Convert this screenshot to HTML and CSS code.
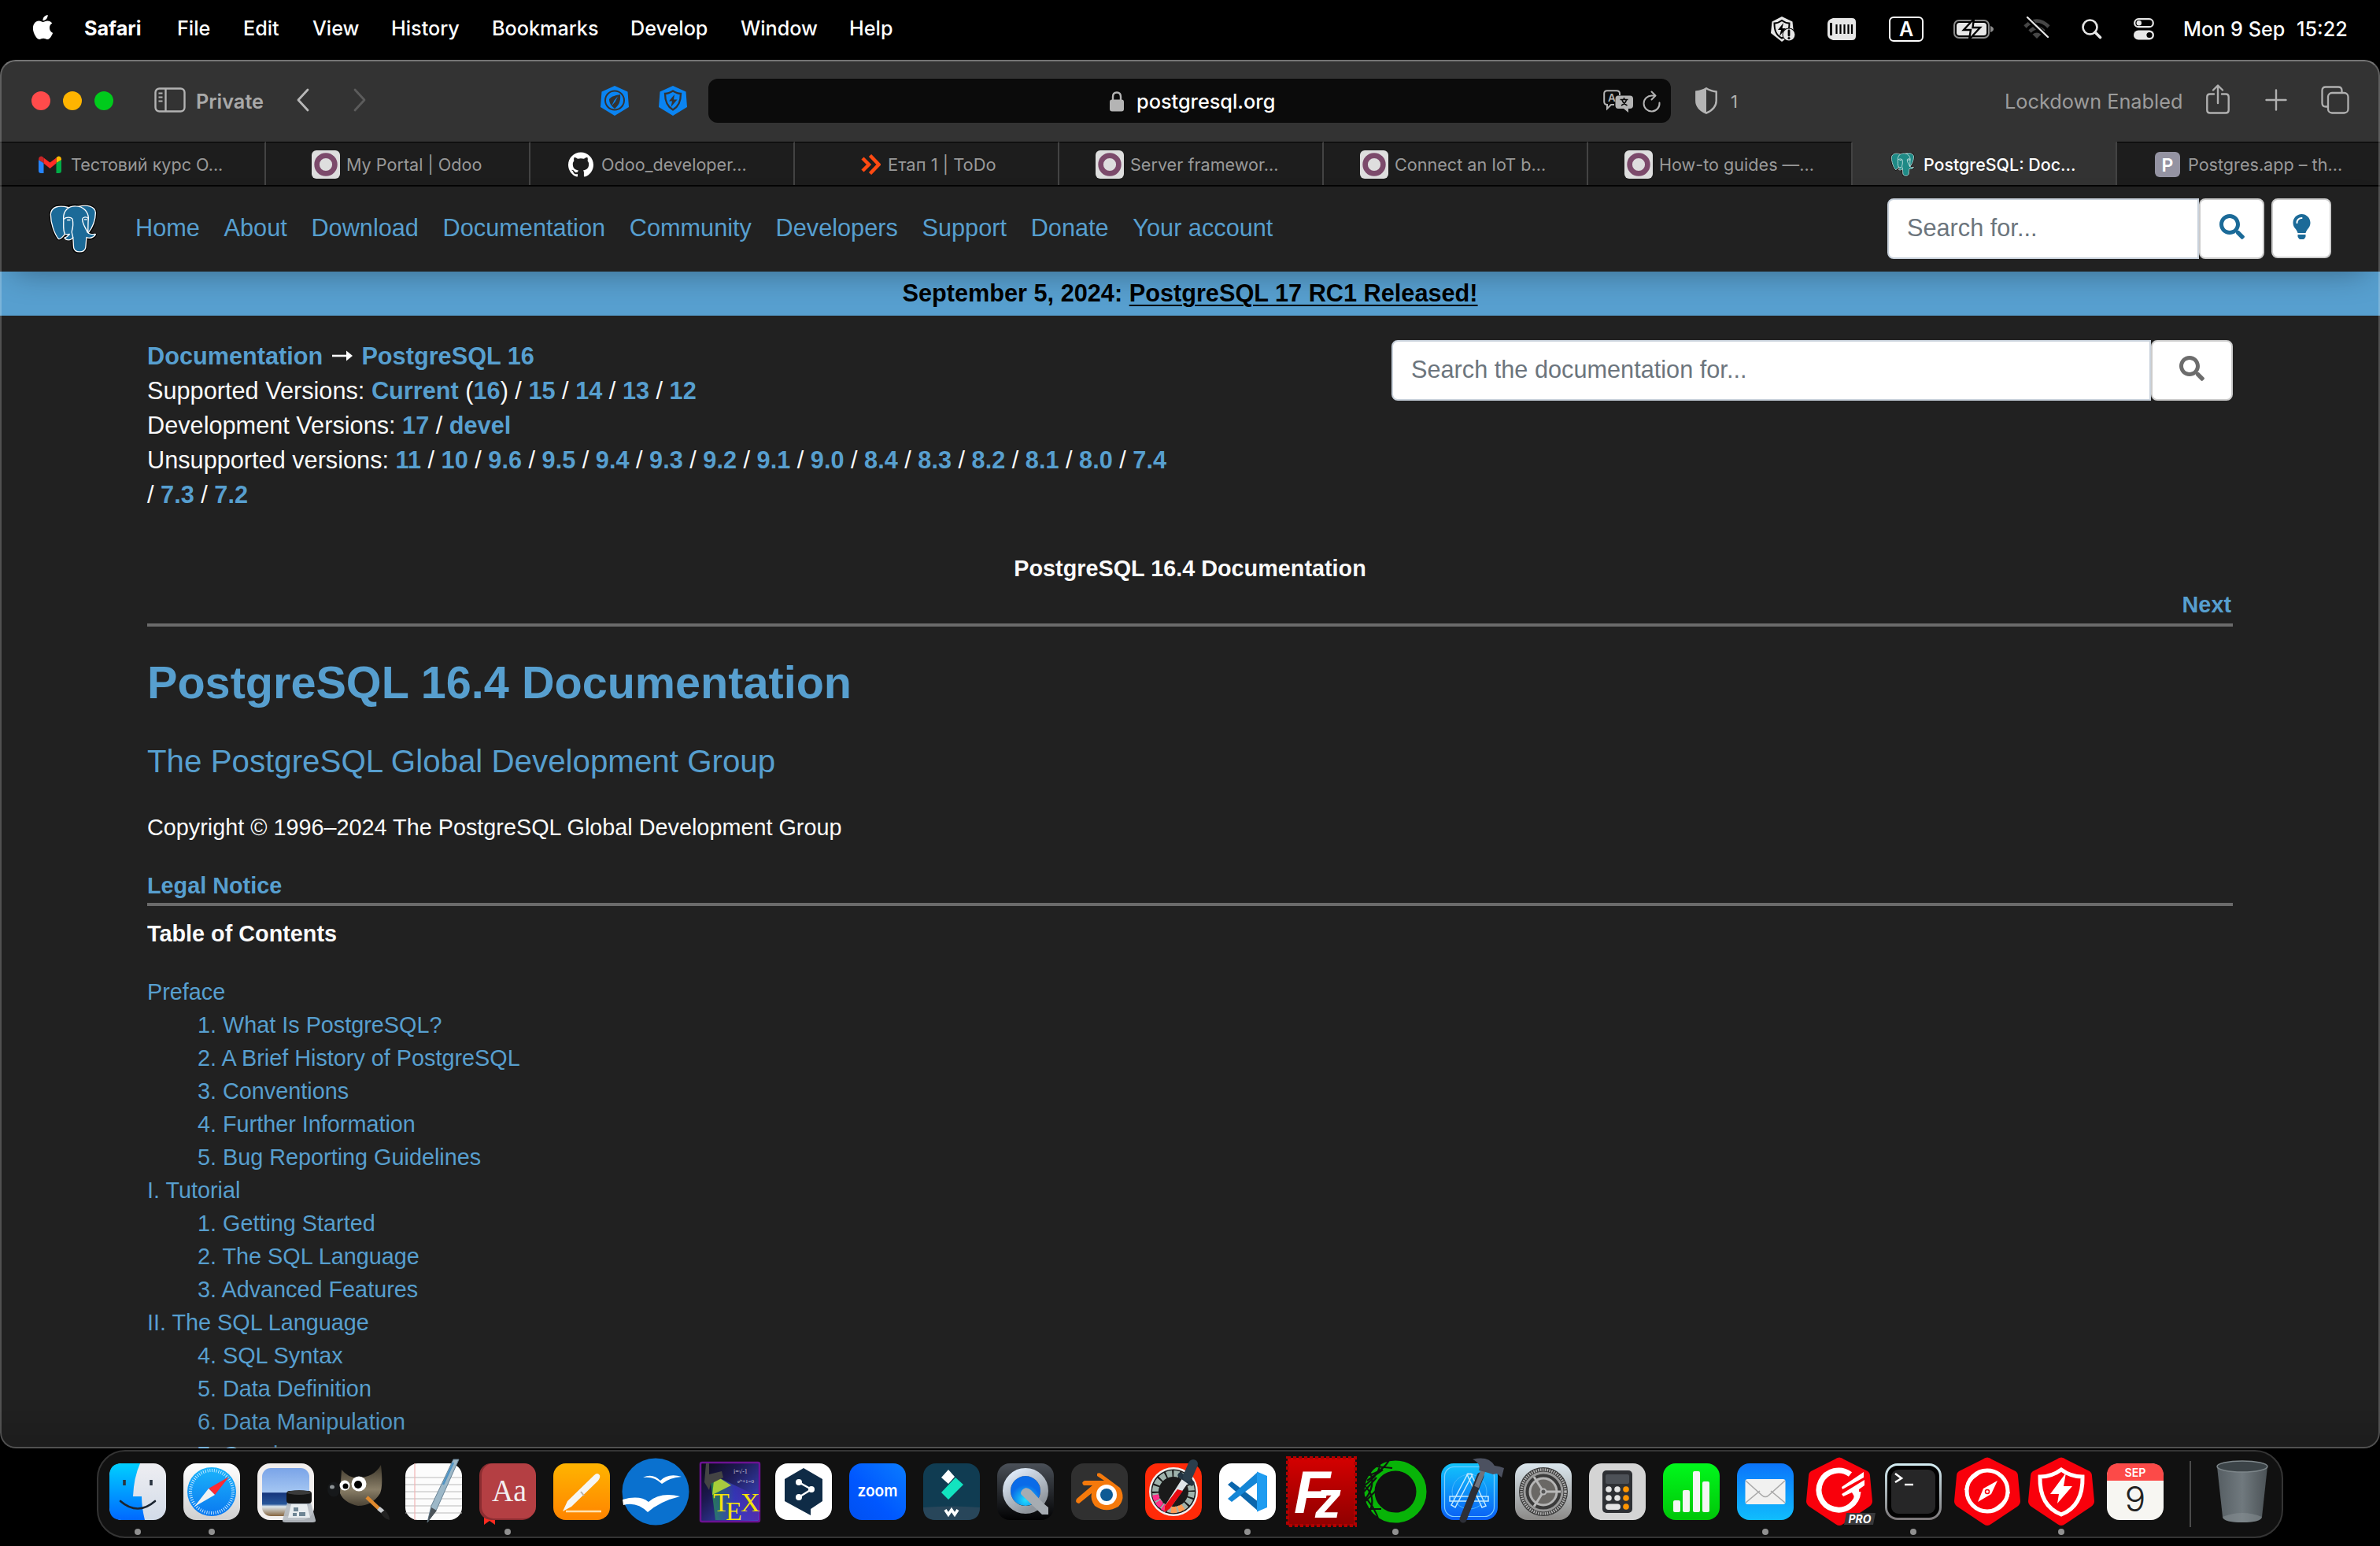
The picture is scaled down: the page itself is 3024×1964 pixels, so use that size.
FILE: index.html
```html
<!DOCTYPE html>
<html lang="en">
<head>
<meta charset="utf-8">
<title>PostgreSQL: Documentation</title>
<link rel="stylesheet" href="styles.css">
</head>
<body>
<svg class="defs" width="0" height="0" aria-hidden="true">
  <defs>
    <symbol id="elephant" viewBox="66 232 186 194">
      <g stroke-linejoin="round" stroke-linecap="round">
        <path d="M130 247C105 238 75 245 73 275C73 310 88 350 103 368C110 372 116 362 126 354C132 352 134 372 142 371L158 366C159 380 159 395 161 404C165 422 200 422 205 403C207 385 207 372 210 364C222 370 240 362 243 352C235 348 228 354 218 346C232 325 244 300 244 268C243 244 210 236 182 244C165 239 145 243 130 247Z" fill="currentColor" stroke="#000" stroke-width="11"/>
        <path d="M182 244C210 236 243 244 244 268C244 300 232 325 216 346L200 300Z" fill="currentColor" stroke="#fff" stroke-width="4"/>
        <path d="M140 248C105 238 75 245 73 275C73 310 88 350 103 368C110 372 116 362 128 350L150 300Z" fill="currentColor" stroke="#fff" stroke-width="4"/>
        <path d="M128 350C118 335 124 305 122 290C121 262 140 242 168 243C198 243 216 265 217 288C215 310 216 330 215 344C220 352 232 350 244 350C240 362 222 368 210 362C208 375 208 390 206 402C202 422 165 422 161 402C159 390 160 375 158 362C150 376 132 374 126 364C136 362 140 356 145 350C140 350 133 353 128 350Z" fill="currentColor" stroke="#fff" stroke-width="4"/>
        <path d="M124 292C132 284 150 284 156 292C160 310 158 325 154 338C152 344 156 350 158 362M217 290C210 282 196 284 194 292C194 312 205 322 214 344M137 296h10M202 294h9" fill="none" stroke="#fff" stroke-width="4"/>
      </g>
    </symbol>
    <symbol id="odoo" viewBox="0 0 36 36">
      <rect width="36" height="36" rx="6" fill="#dedede"/>
      <circle cx="18" cy="18" r="11.4" fill="none" stroke="#7c4a6b" stroke-width="6.6"/>
    </symbol>
    <symbol id="search" viewBox="0 0 512 512">
      <path fill="currentColor" d="M505 442.7L405.3 343c-4.5-4.5-10.6-7-17-7H372c27.6-35.3 44-79.7 44-128C416 93.1 322.9 0 208 0S0 93.1 0 208s93.1 208 208 208c48.3 0 92.7-16.4 128-44v16.3c0 6.4 2.5 12.5 7 17l99.7 99.7c9.4 9.4 24.6 9.4 33.9 0l28.3-28.3c9.4-9.4 9.4-24.6.1-34zM208 336c-70.7 0-128-57.2-128-128 0-70.7 57.2-128 128-128 70.7 0 128 57.2 128 128 0 70.7-57.2 128-128 128z"/>
    </symbol>
    <linearGradient id="gFinder" x2="0" y2="1"><stop stop-color="#00d0ff"/><stop offset="1" stop-color="#0068ff"/></linearGradient>
    <linearGradient id="gFace" x2="0" y2="1"><stop stop-color="#eeeef2"/><stop offset="1" stop-color="#d2dbe8"/></linearGradient>
    <linearGradient id="gWhite" x2="0" y2="1"><stop stop-color="#fff"/><stop offset="1" stop-color="#d0d0d0"/></linearGradient>
    <linearGradient id="gSafari" x2="0" y2="1"><stop stop-color="#1bb4fb"/><stop offset="1" stop-color="#0a78f0"/></linearGradient>
    <linearGradient id="gSky" x2="0" y2="1"><stop stop-color="#7aa4e8"/><stop offset=".5" stop-color="#a4c6f2"/><stop offset=".52" stop-color="#15357c"/><stop offset=".75" stop-color="#28579a"/><stop offset=".8" stop-color="#dfe9ee"/><stop offset="1" stop-color="#86643e"/></linearGradient>
    <linearGradient id="gPages" x2="0" y2="1"><stop stop-color="#ffb400"/><stop offset="1" stop-color="#ff8400"/></linearGradient>
    <linearGradient id="gTex" x2="1" y2="1"><stop stop-color="#0a0a12"/><stop offset=".35" stop-color="#1c1950"/><stop offset="1" stop-color="#4352e0"/></linearGradient>
    <linearGradient id="gBeam" x2="1" y2="0"><stop stop-color="#28b04a"/><stop offset=".5" stop-color="#3a3ad0"/><stop offset="1" stop-color="#5a1c9a"/></linearGradient>
    <linearGradient id="gZoom" x1="1" x2="0" y2="1"><stop stop-color="#0a7cff"/><stop offset=".6" stop-color="#0057ff"/><stop offset="1" stop-color="#0050f0"/></linearGradient>
    <linearGradient id="gQt" x2="0" y2="1"><stop stop-color="#4a5058"/><stop offset="1" stop-color="#020203"/></linearGradient>
    <linearGradient id="gQring" x2=".6" y2="1"><stop stop-color="#e4f0ff"/><stop offset="1" stop-color="#8f959c"/></linearGradient>
    <radialGradient id="gQin" cy=".8"><stop stop-color="#1fe0ff"/><stop offset="1" stop-color="#0a6be8"/></radialGradient>
    <linearGradient id="gFz" x2="0" y2="1"><stop stop-color="#d40000"/><stop offset="1" stop-color="#8f0000"/></linearGradient>
    <linearGradient id="gXcode" x2="0" y2="1"><stop stop-color="#12c4fb"/><stop offset="1" stop-color="#0a5ef5"/></linearGradient>
    <linearGradient id="gSet" x2="0" y2="1"><stop stop-color="#dbe7ee"/><stop offset="1" stop-color="#8b8987"/></linearGradient>
    <linearGradient id="gNum" x2="0" y2="1"><stop stop-color="#00f81c"/><stop offset="1" stop-color="#00c608"/></linearGradient>
    <linearGradient id="gMail" x2="0" y2="1"><stop stop-color="#0b74fb"/><stop offset="1" stop-color="#10bdfd"/></linearGradient>
    <linearGradient id="gTerm" x2="0" y2="1"><stop stop-color="#d4eef4"/><stop offset="1" stop-color="#7b7678"/></linearGradient>
    <linearGradient id="gGimp" x2="0" y2="1"><stop stop-color="#3b3529"/><stop offset=".6" stop-color="#8a7f68"/><stop offset="1" stop-color="#4c4436"/></linearGradient>
    <linearGradient id="gTrash"><stop stop-color="#565e63"/><stop offset=".5" stop-color="#70797e"/><stop offset="1" stop-color="#4b5256"/></linearGradient>
  </defs>
</svg>

<header class="menubar">
  <nav class="menus">
    <svg class="apple" viewBox="0 0 24 24"><path fill="#fff" d="M12.152 6.896c-.948 0-2.415-1.078-3.96-1.04-2.04.027-3.91 1.183-4.961 3.014-2.117 3.675-.546 9.103 1.519 12.09 1.013 1.454 2.208 3.09 3.792 3.039 1.52-.065 2.09-.987 3.935-.987 1.831 0 2.35.987 3.96.948 1.637-.026 2.676-1.48 3.676-2.948 1.156-1.688 1.636-3.325 1.662-3.415-.039-.013-3.182-1.221-3.22-4.857-.026-3.04 2.48-4.494 2.597-4.559-1.429-2.09-3.623-2.324-4.39-2.376-2-.156-3.675 1.09-4.61 1.09zM15.53 3.83c.843-1.012 1.4-2.427 1.245-3.83-1.207.052-2.662.805-3.532 1.818-.78.896-1.454 2.338-1.273 3.714 1.338.104 2.715-.688 3.559-1.701"/></svg>
    <b>Safari</b><span>File</span><span>Edit</span><span>View</span><span>History</span><span>Bookmarks</span><span>Develop</span><span>Window</span><span>Help</span>
  </nav>
  <div class="status">
    <svg width="32" height="34" viewBox="0 0 32 34"><path d="M15 1l13.500 6.500L30 22 15 33 1 22 2.500 7.500z" fill="#e6e6e6"/><path d="M15 6c4 3 7 3.500 9.500 3.500 0 9-2 15-9.500 19C7.500 24.500 5.500 18.500 5.500 9.500 8 9.500 11 9 15 6z" fill="none" stroke="#000" stroke-width="2"/><path d="M17 9l-7 9h4l-2 8 8-10h-4.500z" fill="#000"/><circle cx="24" cy="24" r="8.500" fill="#000"/><circle cx="24" cy="24" r="7.500" fill="#e6e6e6"/><path d="M24 19v6" stroke="#000" stroke-width="2.800" stroke-linecap="round"/><circle cx="24" cy="28.500" r="1.600"/></svg>
    <svg width="36" height="28" viewBox="0 0 36 28"><path d="M7 0H31Q36 0 36 5V23Q36 28 31 28H7Q0 26 0 21V7Q0 2 7 0z" fill="#e6e6e6"/><path d="M3 6h3v16H3z"/><path d="M11.500 8v12M16.500 8v12M21.500 8v12M26.500 8v12M31 8v12" stroke="#000" stroke-width="2.200"/></svg>
    <svg width="44" height="32" viewBox="0 0 44 32"><rect x="1" y="1" width="42" height="30" rx="5" fill="none" stroke="#fff" stroke-width="2"/><text x="22" y="25" text-anchor="middle" class="ui-glyph" font-size="25">A</text></svg>
    <svg width="52" height="26" viewBox="0 0 52 26"><rect x="1" y="2" width="44" height="22" rx="6" fill="none" stroke="#8a8a8a" stroke-width="2"/><rect x="4" y="5" width="38" height="16" rx="3.500" fill="#e6e6e6"/><path d="M47 9q4 1.500 4 4t-4 4z" fill="#8a8a8a"/><path d="M26 0L13 14h9l-2 12 14-15h-9.500z" fill="#e6e6e6" stroke="#000" stroke-width="2.400"/></svg>
    <svg class="wifi" width="34" height="30" viewBox="0 0 34 30"><g fill="none" stroke="#464646" stroke-width="4.600"><path d="M2 13Q17-2 32 13"/><path d="M8 19Q17 10 26 19"/></g><path d="M17 28l-5.500-5.500q5.500-4 11 0z" fill="#464646"/><path d="M5 2l26 25" stroke="#000" stroke-width="6"/><path d="M5 1l26 25" stroke="#e6e6e6" stroke-width="2.300" stroke-linecap="round"/></svg>
    <svg width="26" height="26" viewBox="0 0 26 26"><circle cx="10.500" cy="10.500" r="9" fill="none" stroke="#e6e6e6" stroke-width="2.600"/><path d="M17 17l6.500 6.500" stroke="#e6e6e6" stroke-width="3.600" stroke-linecap="round"/></svg>
    <svg width="26" height="28" viewBox="0 0 26 28"><rect x="1.200" y="1.200" width="23.600" height="10" rx="5" fill="none" stroke="#e6e6e6" stroke-width="2.200"/><circle cx="6.800" cy="6.200" r="3.200" fill="#e6e6e6"/><rect y="15.500" width="26" height="12" rx="6" fill="#e6e6e6"/><circle cx="20" cy="21.500" r="3.600"/></svg>
    <span class="date">Mon 9 Sep</span><span class="time">15:22</span>
  </div>
</header>

<main class="window">
  <div class="toolbar">
    <div class="lights"><i class="red"></i><i class="yellow"></i><i class="green"></i></div>
    <svg class="sidebar" width="40" height="32" viewBox="0 0 40 32"><g fill="none" stroke="#b2b2b2" stroke-width="2.400"><rect x="1.500" y="1.500" width="37" height="29" rx="5"/><path d="M14.500 1v30"/><path d="M5.500 7.500h5M5.500 12.500h5M5.500 17.500h5" stroke-width="2"/></g></svg>
    <span class="private">Private</span>
    <svg class="back" width="18" height="30" viewBox="0 0 18 30"><path d="M15 2L3 15l12 13" fill="none" stroke="#b8b8b8" stroke-width="2.800" stroke-linecap="round" stroke-linejoin="round"/></svg>
    <svg class="fwd" width="18" height="30" viewBox="0 0 18 30"><path d="M3 2l12 13L3 28" fill="none" stroke="#5c5c5c" stroke-width="2.800" stroke-linecap="round" stroke-linejoin="round"/></svg>
    <svg class="ext1" width="38" height="38" viewBox="0 0 38 38"><path d="M19 0l16.500 7.500L37 27 19 38 1 27 2.500 7.500z" fill="#0a84f2"/><circle cx="19" cy="18.500" r="12" fill="none" stroke="#333" stroke-width="2"/><path d="M26 11c-5 1-11 2-14 6 0 5 3 9 7 12 5-4 8-9 7-18z" fill="#333"/><path d="M23 13.500l-3.500 7-4.500 5 3.500-7z" fill="#0a84f2"/></svg>
    <svg class="ext2" width="38" height="38" viewBox="0 0 38 38"><path d="M19 0l16.500 7.500L37 27 19 38 1 27 2.500 7.500z" fill="#0a84f2"/><path d="M19 6.500c4 2.500 7 3.500 10 3.500 0 9-2 16-10 20.500C11 26 9 19 9 10c3 0 6-1 10-3.500z" fill="none" stroke="#333" stroke-width="2.300"/><path d="M21 11l-7 8.500h4L16.500 27l8-9.500H20z" fill="#333"/></svg>
    <div class="url">
      <svg width="18" height="26" viewBox="0 0 18 26"><rect y="10.500" width="18" height="15" rx="3" fill="#b4b4b4"/><path d="M4 11V7q0-5.500 5-5.500T14 7v4" fill="none" stroke="#b4b4b4" stroke-width="2.400"/></svg>
      <span class="host">postgresql.org</span>
      <svg class="translate" width="38" height="30" viewBox="0 0 38 30"><path d="M14 19H10L5 24V19Q1.200 19 1.200 15V5Q1.200 1.200 5 1.200H17Q21 1.200 21 5V7" fill="none" stroke="#b4b4b4" stroke-width="2"/><text x="11" y="15" font-size="13.500" text-anchor="middle" class="ui-glyph soft">A</text><path d="M19 7.500H34Q38 7.500 38 11.500V20Q38 24 34 24H32V29L26 24H19Q15.500 24 15.500 20V11.500Q15.500 7.500 19 7.500z" fill="#b4b4b4"/><path d="M21.500 12.500h10M26.500 10v2.500M23 20q5-2.500 6.500-7M30.500 20q-5-2.500-6.500-7" stroke="#0b0b0b" stroke-width="1.700" fill="none"/></svg>
      <svg class="reload" width="24" height="28" viewBox="0 0 24 28"><path d="M21.500 15.500A10 10 0 1 1 12 6.500h3.500M11.500 1.500l5 5-5 5" fill="none" stroke="#b4b4b4" stroke-width="2" stroke-linecap="round" stroke-linejoin="round"/></svg>
    </div>
    <svg class="shield" width="28" height="34" viewBox="0 0 28 34"><path d="M14 1.300C18 4 22 5 26.700 5.500V17Q26.700 27 14 32.700 1.300 27 1.300 17V5.500C6 5 10 4 14 1.300z" fill="none" stroke="#b4b4b4" stroke-width="2.400"/><path d="M14 1V33Q1 27 1 17V5.500C6 5 10 4 14 1z" fill="#b4b4b4"/></svg>
    <span class="count">1</span>
    <span class="lockdown">Lockdown Enabled</span>
    <svg class="share" width="30" height="38" viewBox="0 0 30 38"><g fill="none" stroke="#b0b0b0" stroke-width="2.400" stroke-linecap="round" stroke-linejoin="round"><path d="M10 12.500H5Q1.300 12.500 1.300 16V33Q1.300 36.500 5 36.500H25Q28.700 36.500 28.700 33V16Q28.700 12.500 25 12.500H20"/><path d="M15 24V2M9 7.500L15 1.500l6 6"/></g></svg>
    <svg class="plus" width="28" height="28" viewBox="0 0 28 28"><path d="M14 1.500v25M1.500 14h25" stroke="#b0b0b0" stroke-width="2.400" stroke-linecap="round"/></svg>
    <svg class="tabsicon" width="36" height="36" viewBox="0 0 36 36"><g fill="none" stroke="#b0b0b0" stroke-width="2.300"><rect x="9" y="9" width="25.500" height="25.500" rx="5"/><path d="M9 26.500H6Q1.500 26.500 1.500 22V6Q1.500 1.500 6 1.500H22Q26.500 1.500 26.500 6V9"/></g></svg>
  </div>

  <div class="tabs">
    <div class="tab t1"><svg width="29" height="22" viewBox="0 0 29 22"><path d="M0 5v14q0 3 3 3h3.500V9z" fill="#2684fc"/><path d="M29 5v14q0 3-3 3h-3.500V9z" fill="#00ac47"/><path d="M22.500 9V2.500Q25-1 28 1.500 29 2.500 29 5z" fill="#ffba00"/><path d="M6.500 9V2.500Q4-1 1 1.500 0 2.500 0 5z" fill="#c52528"/><path d="M6.500 2.500l8 6 8-6V9.500l-8 6.500-8-6.500z" fill="#fe2c25"/></svg><span>Тестовий курс О...</span></div>
    <div class="tab t2"><svg width="36" height="36"><use href="#odoo"/></svg><span>My Portal | Odoo</span></div>
    <div class="tab t3"><svg width="32" height="32" viewBox="0 0 24 24"><path fill="#fff" d="M12 .297c-6.630 0-12 5.373-12 12 0 5.303 3.438 9.800 8.205 11.385.600.113.820-.258.820-.577 0-.285-.010-1.040-.015-2.040-3.338.724-4.042-1.610-4.042-1.610C4.422 18.070 3.633 17.700 3.633 17.700c-1.087-.744.084-.729.084-.729 1.205.084 1.838 1.236 1.838 1.236 1.070 1.835 2.809 1.305 3.495.998.108-.776.417-1.305.760-1.605-2.665-.300-5.466-1.332-5.466-5.930 0-1.310.465-2.380 1.235-3.220-.135-.303-.540-1.523.105-3.176 0 0 1.005-.322 3.300 1.230.960-.267 1.980-.399 3-.405 1.020.006 2.040.138 3 .405 2.280-1.552 3.285-1.230 3.285-1.230.645 1.653.240 2.873.120 3.176.765.840 1.230 1.910 1.230 3.220 0 4.610-2.805 5.625-5.475 5.920.420.360.810 1.096.810 2.220 0 1.606-.015 2.896-.015 3.286 0 .315.210.690.825.570C20.565 22.092 24 17.592 24 12.297c0-6.627-5.373-12-12-12"/></svg><span>Odoo_developer...</span></div>
    <div class="tab t4"><svg width="26" height="26" viewBox="0 0 26 26"><path d="M3 5l8 8-8 8" fill="none" stroke="#ff4a12" stroke-width="4.500"/><path d="M12.500 1.500L23.500 13 12.500 24.500" fill="none" stroke="#ff4a12" stroke-width="4.500"/></svg><span>Етап 1 | ToDo</span></div>
    <div class="tab t5"><svg width="36" height="36"><use href="#odoo"/></svg><span>Server framewor...</span></div>
    <div class="tab t6"><svg width="36" height="36"><use href="#odoo"/></svg><span>Connect an IoT b...</span></div>
    <div class="tab t7"><svg width="36" height="36"><use href="#odoo"/></svg><span>How-to guides —...</span></div>
    <div class="tab t8 active"><svg class="fav-pg" width="31" height="32"><use href="#elephant"/></svg><span>PostgreSQL: Doc...</span></div>
    <div class="tab t9"><svg width="32" height="32" viewBox="0 0 32 32"><rect width="32" height="32" rx="6" fill="#9493a2"/><text x="16" y="24.500" font-size="23" text-anchor="middle" class="ui-glyph">P</text></svg><span>Postgres.app – th...</span></div>
  </div>

  <nav class="sitenav">
    <svg class="logo" width="62" height="65"><use href="#elephant"/></svg>
    <div class="links"><a>Home</a><a>About</a><a>Download</a><a>Documentation</a><a>Community</a><a>Developers</a><a>Support</a><a>Donate</a><a>Your account</a></div>
    <div class="field site-field">Search for...</div>
    <button class="btn site-btn"><svg width="32" height="32"><use href="#search"/></svg></button>
    <button class="btn bulb"><svg width="23" height="32" viewBox="0 0 352 512"><path fill="currentColor" d="M96.060 454.350c.010 6.290 1.870 12.450 5.360 17.690l17.090 25.690a31.990 31.990 0 0 0 26.640 14.280h61.710a31.990 31.990 0 0 0 26.640-14.280l17.090-25.690a31.989 31.989 0 0 0 5.360-17.690l.040-38.350H96.010l.050 38.350zM0 176c0 44.370 16.450 84.850 43.560 115.780 16.520 18.850 42.360 58.230 52.210 91.450.040.260.070.520.110.780h160.240c.040-.260.070-.510.110-.780 9.850-33.220 35.690-72.600 52.210-91.450C335.550 260.850 352 220.370 352 176 352 78.610 272.910-.300 175.450 0 73.440.310 0 82.970 0 176zm176-80c-44.110 0-80 35.890-80 80 0 8.840-7.160 16-16 16s-16-7.160-16-16c0-61.760 50.240-112 112-112 8.840 0 16 7.160 16 16s-7.160 16-16 16z"/></svg></button>
  </nav>
  <div class="banner">September 5, 2024: <a>PostgreSQL 17 RC1 Released!</a></div>

  <article class="doc">
    <div class="dochead">
      <div class="versions">
        <a>Documentation</a> <svg class="arrow" width="26" height="18" viewBox="0 0 26 18"><path d="M0 9h22" stroke="#fff" stroke-width="2.600"/><path d="M18 2.500L26 9l-8 6.500z" fill="#fff"/></svg> <a>PostgreSQL 16</a><br>
        Supported Versions: <a>Current</a> (<a>16</a>) / <a>15</a> / <a>14</a> / <a>13</a> / <a>12</a><br>
        Development Versions: <a>17</a> / <a>devel</a><br>
        Unsupported versions: <a>11</a> / <a>10</a> / <a>9.6</a> / <a>9.5</a> / <a>9.4</a> / <a>9.3</a> / <a>9.2</a> / <a>9.1</a> / <a>9.0</a> / <a>8.4</a> / <a>8.3</a> / <a>8.2</a> / <a>8.1</a> / <a>8.0</a> / <a>7.4</a><br>
        / <a>7.3</a> / <a>7.2</a>
      </div>
      <div class="docsearch">
        <div class="field doc-field">Search the documentation for...</div>
        <button class="btn doc-btn"><svg width="32" height="32"><use href="#search"/></svg></button>
      </div>
    </div>
    <div class="pagetitle">PostgreSQL 16.4 Documentation</div>
    <div class="next"><a>Next</a></div>
    <h1>PostgreSQL 16.4 Documentation</h1>
    <h2>The PostgreSQL Global Development Group</h2>
    <p class="copy">Copyright © 1996–2024 The PostgreSQL Global Development Group</p>
    <div class="legal"><a>Legal Notice</a></div>
    <p class="toctitle">Table of Contents</p>
    <dl class="toc">
      <dt>Preface</dt>
      <dd>1. What Is PostgreSQL?</dd><dd>2. A Brief History of PostgreSQL</dd><dd>3. Conventions</dd><dd>4. Further Information</dd><dd>5. Bug Reporting Guidelines</dd>
      <dt>I. Tutorial</dt>
      <dd>1. Getting Started</dd><dd>2. The SQL Language</dd><dd>3. Advanced Features</dd>
      <dt>II. The SQL Language</dt>
      <dd>4. SQL Syntax</dd><dd>5. Data Definition</dd><dd>6. Data Manipulation</dd><dd>7. Queries</dd>
    </dl>
  </article>
</main>

<footer class="dock">
  <!-- Finder -->
  <svg class="app" viewBox="-47 -51 94 108"><rect x="-36" y="-36" width="72" height="72" rx="16" fill="url(#gFace)"/><path d="M3-36H-20Q-36-36-36-20V20Q-36 36-20 36H9Q5 20 5 6H-6Q-5-18 3-36z" fill="url(#gFinder)"/><path d="M-17-15v7M17-15v7" stroke="#2a3440" stroke-width="3.600"/><path d="M-22 12Q0 31 22 12" fill="none" stroke="#1b2430" stroke-width="2.600" stroke-linecap="round"/><circle cy="51" r="4" class="dot"/></svg>
  <!-- Safari -->
  <svg class="app" viewBox="-47 -51 94 108"><rect x="-36" y="-36" width="72" height="72" rx="16" fill="url(#gWhite)"/><circle r="31" fill="url(#gSafari)"/><circle r="27" fill="none" stroke="#d8efff" stroke-width="4" stroke-dasharray=".9 1.920"/><path d="M22-19L4 4-4-4z" fill="#ff2a32"/><path d="M-22 19L4 4-4-4z" fill="#f2f2f2"/><circle cy="51" r="4" class="dot"/></svg>
  <!-- Preview -->
  <svg class="app" viewBox="-47 -51 94 108"><rect x="-36" y="-36" width="72" height="72" rx="16" fill="#f2efee"/><rect x="-30" y="-30" width="60" height="61" rx="11" fill="url(#gSky)"/><path d="M2 14L-4 36Q-5 39 0 39H34Q39 39 38 36L32 14z" fill="#b9bec4" opacity=".92"/><path d="M7 16L3 33H31L27 16z" fill="#e9edf0"/><path d="M10 20h6v5h-6zM17 26h8v5h-8zM9 27h5v4H9z" fill="#6f8594"/><rect x="1" y="-1" width="32" height="16" rx="4" fill="#141414"/><ellipse cx="17" cy="1" rx="15" ry="3" fill="#3a3a3a"/></svg>
  <!-- GIMP -->
  <svg class="app" viewBox="-47 -51 94 108"><path d="M-23-28Q-14-17-2-18 18-18 27-34 30-8 26 2 16 18-2 18-20 14-25 2z" fill="url(#gGimp)"/><ellipse cx="-33" cy="-3" rx="8" ry="9.500" fill="#16181a"/><ellipse cx="-35" cy="-6" rx="3" ry="2.500" fill="#8d9396"/><circle cx="-19" cy="-8" r="6.500" fill="#fff"/><circle cx="-1" cy="-10" r="9.500" fill="#fff"/><circle cx="-18" cy="-7" r="3.500"/><circle cx="-2" cy="-9" r="5"/><path d="M9 7L26 23" stroke="#e08a2e" stroke-width="4.500"/><path d="M24 21l6 5" stroke="#c9ccd0" stroke-width="5.500"/><path d="M27 27l5-4Q38 30 38 36 30 34 27 27z" fill="#222"/></svg>
  <!-- TextEdit -->
  <svg class="app" viewBox="-47 -51 94 108"><rect x="-36" y="-36" width="72" height="72" rx="16" fill="#fcfcfc"/><path d="M-36-18h72M-36-9h72M-36 0h72M-36 9h72M-36 18h72M-36 27h72" stroke="#b9b9b9" stroke-width="1.200"/><path d="M-24-36v72" stroke="#f0b4b4" stroke-width="1.200"/><path d="M25-41L-3 18-8 39 4 22 32-41z" fill="#9db8c8" stroke="#6a8496" stroke-width="1"/><path d="M-3 20L-8 39 4 24z" fill="#4c545a"/><path d="M25-37L12-9" stroke="#4f93c4" stroke-width="2.500"/></svg>
  <!-- Dictionary -->
  <svg class="app" viewBox="-47 -51 94 108"><path d="M-30 32h14v10l-7-5-7 5z" fill="#ff2a20"/><rect x="-36" y="-36" width="70" height="72" rx="15" fill="#8c2d31"/><rect x="-33" y="-36" width="69" height="70" rx="15" fill="#b43f43"/><text x="2" y="12" text-anchor="middle" font-size="40" class="serif-glyph" fill="#f2eeee" textLength="44" lengthAdjust="spacingAndGlyphs">Aa</text><circle cy="51" r="4" class="dot"/></svg>
  <!-- Pages -->
  <svg class="app" viewBox="-47 -51 94 108"><rect x="-36" y="-36" width="72" height="72" rx="16" fill="url(#gPages)"/><path d="M-20 25H25" stroke="#ffe1b0" stroke-width="2.400"/><path d="M-24 25L-18 12 16-21Q20-25 23-21 24-18 21-14L-13 19z" fill="#f6f6f4"/><path d="M-1 0l4 5" stroke="#b9b2a6" stroke-width="2"/></svg>
  <!-- OpenOffice -->
  <svg class="app" viewBox="-47 -51 94 108"><circle r="42.500" fill="#0a71cf"/><path d="M-16-18Q-4-24 6-14 16-24 33-19 18-18 8-10-2-20-16-18z" fill="#fff"/><path d="M-42 10Q-20 4-9 13 6 0 31 6 6 12-10 26-24 12-41 17z" fill="#fff"/></svg>
  <!-- TeXShop -->
  <svg class="app" viewBox="-47 -51 94 108"><rect x="-37" y="-37" width="75" height="75" rx="2" fill="url(#gTex)" stroke="#6c1292" stroke-width="2.500"/><path d="M-24-12L-14-18 36 6V36H-18z" fill="url(#gBeam)" opacity=".65"/><path d="M-20-14l6-4 16 10-24 12z" fill="#c8e830" opacity=".8"/><path d="M-30-36h4v14l16-4 2 8-16 8-2 8-6-10z" fill="#444"/><text x="5" y="-23" font-size="8" fill="#c8c8d8" class="serif-glyph">i=√-1</text><text x="10" y="-11" font-size="7" fill="#c8c8d8" class="serif-glyph">eⁱˣ+1=0</text><text class="serif-glyph" fill="#f4e409" font-size="34" x="-21 -5 14" y="25 36 25">TEX</text></svg>
  <!-- DeepL -->
  <svg class="app" viewBox="-47 -51 94 108"><rect x="-36" y="-36" width="72" height="72" rx="16" fill="#fff"/><path d="M0-30L24-16V12L9 22V30L-2 24-24 12V-16z" fill="#0f2b46"/><path d="M-6-12L10-3-6 7" fill="none" stroke="#fff" stroke-width="2.400"/><circle cx="-6" cy="-12" r="4" fill="#fff"/><circle cx="10" cy="-3" r="4" fill="#fff"/><circle cx="-6" cy="7" r="4" fill="#fff"/></svg>
  <!-- Zoom -->
  <svg class="app" viewBox="-47 -51 94 108"><rect x="-36" y="-36" width="72" height="72" rx="16" fill="url(#gZoom)"/><text y="6" text-anchor="middle" font-size="21" class="ui-glyph" textLength="51" lengthAdjust="spacingAndGlyphs">zoom</text></svg>
  <!-- Filmora -->
  <svg class="app" viewBox="-47 -51 94 108"><rect x="-36" y="-36" width="72" height="72" rx="16" fill="#103c52"/><path d="M-36 20Q0 17 36 20Q36 36 20 36H-20Q-36 36-36 20z" fill="#28465a"/><path d="M-4-28L4-19-4-10-13-18z" fill="#fff"/><path d="M5-18L15-9-4 10-13 1z" fill="#12e3c0"/><path d="M-8 23l4 6 4-6 4 6 4-6" fill="none" stroke="#fff" stroke-width="3.600"/></svg>
  <!-- QuickTime -->
  <svg class="app" viewBox="-47 -51 94 108"><rect x="-36" y="-36" width="72" height="72" rx="16" fill="url(#gQt)"/><circle cy="-1" r="19" fill="url(#gQin)"/><circle cy="-1" r="24" fill="none" stroke="url(#gQring)" stroke-width="10"/><path d="M-5-1Q0-8 7-2L23 15 29 20V29H21L-5 4Q-7 2-5-1z" fill="#a6acb2"/></svg>
  <!-- Blender -->
  <svg class="app" viewBox="-47 -51 94 108"><rect x="-36" y="-36" width="72" height="72" rx="16" fill="#303030"/><path d="M-3-23Q0-25 3-22L26-5Q34 8 24 19 8 28-6 18-12 10-10 2L-26 15Q-32 14-29 9L-9-8H-20Q-24-12-19-14H6L-3-20z" fill="#f5790b"/><circle cx="9" cy="4" r="13" fill="#fff"/><circle cx="9" cy="4" r="8" fill="#0e5a94"/></svg>
  <!-- Digital Color Meter -->
  <svg class="app" viewBox="-47 -51 94 108"><rect x="-36" y="-36" width="72" height="72" rx="16" fill="#ff2a08"/><circle r="31" fill="#f0f0f0"/><circle r="28.500" fill="#1a1a1a"/><circle r="23" fill="none" stroke="#9fb3ac" stroke-width="8" stroke-dasharray="7 2"/><path d="M-23 4A23 23 0 0 0-8 22" fill="none" stroke="#ff2f88" stroke-width="8" stroke-dasharray="7 2"/><path d="M-3 23A23 23 0 0 0 14 18" fill="none" stroke="#ff9a52" stroke-width="8" stroke-dasharray="7 2"/><path d="M12-18L-11 18-12 26-5 22 19-12z" fill="#dfe5e8"/><path d="M5-3L-11 18-12 26-5 22 12-1z" fill="#e80a12"/><path d="M9-21l14 10" stroke="#223442" stroke-width="7" stroke-linecap="round"/><path d="M18-19L25-35" stroke="#2a3e4c" stroke-width="12" stroke-linecap="round"/></svg>
  <!-- VS Code -->
  <svg class="app" viewBox="-47 -51 94 108"><rect x="-36" y="-36" width="72" height="72" rx="16" fill="#fff"/><path d="M-25-9L-20-13 14 13V25z" fill="#0b66ac"/><path d="M-25 9L-20 13 13-12V-25z" fill="#1486d6"/><path d="M12-25.500L25-20V20L12 25.500Z" fill="#1f9cf0"/><circle cy="51" r="4" class="dot"/></svg>
  <!-- FileZilla -->
  <svg class="app" viewBox="-47 -51 94 108"><rect x="-43" y="-43" width="86" height="86" fill="url(#gFz)" stroke="#b30000" stroke-width="4" stroke-dasharray="4.200 2.800"/><text class="fz-glyph" font-size="76" x="-35" y="27">F<tspan x="-8" y="33" font-size="66">z</tspan></text></svg>
  <!-- Anaconda -->
  <svg class="app" viewBox="-47 -51 94 108"><circle r="33" fill="none" stroke="#08b408" stroke-width="13"/><path d="M-7-42Q-16-24-38-20M-20-38Q-18-22-42-6M-34-28Q-22-8-42 14M-42-10Q-22 6-34 28M-42 4Q-26 18-20 40M-24-32L-4-30M-36-14L-16-28M-40 0L-24-18M-38 12L-24-2M-36 22H-18" fill="none" stroke="#111" stroke-width="2.200"/><circle cy="51" r="4" class="dot"/></svg>
  <!-- Xcode -->
  <svg class="app" viewBox="-47 -51 94 108"><rect x="-36" y="-36" width="72" height="72" rx="16" fill="url(#gXcode)"/><rect x="-31.500" y="-31.500" width="63" height="63" rx="12" fill="none" stroke="#7fd0ff" stroke-width="1.200"/><circle r="22" fill="none" stroke="#4ab6fb" stroke-width="1"/><g fill="none" stroke="#c4eaff" stroke-width="1.500"><path d="M-3-22L16 20 21 18 2-23zM4-22L-18 20-23 17-2-23zM-25 6H24V12H-25z"/></g><path d="M14-20L-8 35" stroke="#2d2f38" stroke-width="9" stroke-linecap="round"/><path d="M18-28L9-6" stroke="#70737c" stroke-width="6"/><path d="M4-41Q24-46 32-33L38-32 44-30 41-18 35-23 30-22Q22-25 12-27 15-36 4-41z" fill="#4c5160"/></svg>
  <!-- Settings -->
  <svg class="app" viewBox="-47 -51 94 108"><rect x="-36" y="-36" width="72" height="72" rx="16" fill="url(#gSet)"/><circle r="31" fill="#3a3a3a"/><circle r="28" fill="none" stroke="#b2b2b2" stroke-width="3.500" stroke-dasharray="1.600 1.300"/><circle r="24" fill="none" stroke="#999" stroke-width="3"/><circle r="17" fill="#6a6865" stroke="#b4b4b4" stroke-width="3"/><path d="M0 0L-12-19M0 0H22M0 0L-12 19" stroke="#b8b8b8" stroke-width="3"/><circle r="3.500" fill="#555" stroke="#b8b8b8" stroke-width="2"/></svg>
  <!-- Calculator -->
  <svg class="app" viewBox="-47 -51 94 108"><rect x="-36" y="-36" width="72" height="72" rx="16" fill="#d4d4d4"/><rect x="-19" y="-27" width="38" height="54" rx="5" fill="#2e3034"/><rect x="-15" y="-22" width="30" height="12" rx="2" fill="#4d5157"/><g fill="#e4e4e4"><circle cx="-11" cy="-3" r="3.800"/><circle cy="-3" r="3.800"/><circle cx="-11" cy="8" r="3.800"/><circle cy="8" r="3.800"/><rect x="-15" y="15.500" width="19" height="7.500" rx="3.700"/></g><g fill="#ff9500"><circle cx="11" cy="-3" r="3.800"/><circle cx="11" cy="8" r="3.800"/><circle cx="11" cy="19" r="3.800"/></g></svg>
  <!-- Numbers -->
  <svg class="app" viewBox="-47 -51 94 108"><rect x="-36" y="-36" width="72" height="72" rx="16" fill="url(#gNum)"/><g fill="#f4f6f4"><rect x="-23" y="11" width="9" height="15" rx="2"/><rect x="-11" y="-2" width="9" height="28" rx="2"/><rect x="2" y="-26" width="9" height="52" rx="2"/><rect x="14" y="-13" width="9" height="39" rx="2"/></g></svg>
  <!-- Mail -->
  <svg class="app" viewBox="-47 -51 94 108"><rect x="-36" y="-36" width="72" height="72" rx="16" fill="url(#gMail)"/><rect x="-25.500" y="-16" width="51" height="32" rx="3" fill="#f1f1f0"/><path d="M-25 14L-7-1M25 14L7-1M-25-14L-5 4Q0 9 5 4L25-14" fill="none" stroke="#a8a8a8" stroke-width="1.600"/><circle cy="51" r="4" class="dot"/></svg>
  <!-- Trend Micro cleaner -->
  <svg class="app" viewBox="-47 -51 94 108"><path d="M-6-41Q0-46 6-41L36-26Q39-24 39-20L42 12Q42 16 38 19L5 41Q0 45-5 41L-38 19Q-42 16-42 12L-39-20Q-39-24-36-26z" fill="#f9000b"/><path d="M14-22A25 25 0 1 0 24 0" fill="none" stroke="#fff" stroke-width="7"/><path d="M3-6L31-25V-18L4-3z" fill="#fff"/><path d="M3 3L32-15V-8L25-3Q26 14 16 20 22 8 16 1L5 6z" fill="#fff"/><path d="M9 27H46L43 42H6z" fill="#39393b"/><text x="26" y="39.500" font-size="14.500" text-anchor="middle" class="ui-glyph ital" textLength="29" lengthAdjust="spacingAndGlyphs">PRO</text></svg>
  <!-- Terminal -->
  <svg class="app" viewBox="-47 -51 94 108"><rect x="-36" y="-36" width="72" height="72" rx="16" fill="url(#gTerm)"/><rect x="-33" y="-33" width="66" height="66" rx="13" fill="#020202"/><rect x="-28" y="-28" width="56" height="56" rx="9" fill="#262627"/><path d="M-23-23L-15-17-23-12" fill="none" stroke="#fff" stroke-width="2.600"/><path d="M-11-9H0" stroke="#fff" stroke-width="2.400"/><circle cy="51" r="4" class="dot"/></svg>
  <!-- Safe browser -->
  <svg class="app" viewBox="-47 -51 94 108"><path d="M-6-41Q0-46 6-41L36-26Q39-24 39-20L42 12Q42 16 38 19L5 41Q0 45-5 41L-38 19Q-42 16-42 12L-39-20Q-39-24-36-26z" fill="#f9000b"/><circle cy="-1" r="26" fill="none" stroke="#fff" stroke-width="5"/><path d="M-28-2Q-24-24-2-27-20-20-28-2zM28 0Q24 22 2 25 20 18 28 0z" fill="#fff" stroke="#fff" stroke-width="2"/><path d="M13-14L5 3-12 13-5-4z" fill="#fff"/><circle r="2.500" fill="#fff" stroke="#f9000b" stroke-width="1.500"/></svg>
  <!-- Antivirus -->
  <svg class="app" viewBox="-47 -51 94 108"><path d="M-6-41Q0-46 6-41L36-26Q39-24 39-20L42 12Q42 16 38 19L5 41Q0 45-5 41L-38 19Q-42 16-42 12L-39-20Q-39-24-36-26z" fill="#f9000b"/><path d="M0-28Q12-19 27-19 28 18 0 29-28 18-27-19-12-19 0-28z" fill="none" stroke="#fff" stroke-width="5"/><path d="M6-24L-14 3H-3L-5 15 14-7H3z" fill="#fff"/><circle cy="51" r="4" class="dot"/></svg>
  <!-- Calendar -->
  <svg class="app" viewBox="-47 -51 94 108"><rect x="-36" y="-36" width="72" height="72" rx="16" fill="#f7f6f2"/><path d="M-36-14V-20Q-36-36-20-36H20Q36-36 36-20V-14z" fill="#fc4a48"/><text y="-19" font-size="14" text-anchor="middle" class="ui-glyph" textLength="27" lengthAdjust="spacingAndGlyphs">SEP</text><text y="25" font-size="44" text-anchor="middle" class="thin-glyph">9</text></svg>
  <i class="divider"></i>
  <!-- Trash -->
  <svg class="app" viewBox="-47 -51 94 108"><path d="M-32-32L-25 32Q-24 39 0 39T25 32L32-32z" fill="url(#gTrash)"/><ellipse cy="-32" rx="32" ry="7" fill="#3c4448" stroke="#7d868a" stroke-width="1.500"/><path d="M-25 32Q0 22 25 32 24 39 0 39T-25 32z" fill="#8a9296" opacity=".5"/></svg>
</footer>
</body>
</html>
```
FILE: styles.css
```css
* { box-sizing: border-box; }

body {
  margin: 0;
  width: 3024px;
  height: 1964px;
  overflow: hidden;
  background: #000;
  color: #fff;
  font-family: "Inter", "Noto Sans", sans-serif;
}

svg { display: block; flex: none; }
.defs { position: absolute; }
p, h1, h2, dl, dd { margin: 0; }

/* menu bar */
.menubar {
  height: 76px;
  display: flex;
  justify-content: space-between;
  font-size: 25.2px;
  font-weight: 500;
  line-height: 73px;
  white-space: nowrap;
}
.menus {
  display: grid;
  grid-template-columns: 68px 118px 84px 88px 100px 128px 176px 140px 138px 100px;
  padding-left: 39px;
}
.menus b { font-weight: 700; }
.apple { width: 31px; height: 31px; margin-top: 19px; }
.status {
  display: grid;
  grid-template-columns: 73px 78px 82px 89px 74px 66px 63px 144px 106px;
  align-items: center;
  height: 74px;
}
.wifi { margin-bottom: 3px; }
.ui-glyph { font-family: "Inter", sans-serif; font-weight: 600; fill: #fff; }
.ui-glyph.soft { fill: #b4b4b4; }
.ital { font-style: italic; font-weight: 700; }
.serif-glyph { font-family: "Liberation Serif", serif; }
.thin-glyph { font-family: "Inter", sans-serif; font-weight: 300; fill: #222; }
.fz-glyph { font-family: "Liberation Sans", sans-serif; font-weight: 700; font-style: italic; fill: #fff; }

/* browser window */
.window {
  position: relative;
  height: 1764px;
  border-radius: 20px;
  overflow: hidden;
  background: #212121;
}
.window::after {
  content: "";
  position: absolute;
  inset: 0;
  z-index: 5;
  border: 2px solid rgba(255, 255, 255, 0.22);
  border-top-color: #757575;
  border-radius: 20px;
  background: linear-gradient(transparent 1700px, rgba(0, 0, 0, 0.12));
}
.toolbar {
  height: 104px;
  display: flex;
  align-items: center;
  background: #333;
  font-size: 25.3px;
  line-height: 40px;
  white-space: nowrap;
}
.lights { display: flex; gap: 16px; margin-left: 40px; width: 156px; }
.lights i { width: 24px; height: 24px; border-radius: 50%; }
.red { background: #ff4b4b; }
.yellow { background: #ffb400; }
.green { background: #00cb1c; }
.sidebar { margin-bottom: 2px; }
.private { width: 88px; margin: 2px 0 0 13px; font-weight: 600; color: #a9a9a9; }
.back { margin: 0 0 2px 39px; }
.fwd { margin: 0 0 2px 54px; }
.ext1 { margin-left: 296px; }
.ext2 { margin-left: 36px; }
.url {
  display: flex;
  align-items: center;
  width: 1223px;
  height: 56px;
  margin-left: 26px;
  padding-left: 510px;
  border-radius: 12px;
  background: #0b0b0b;
  font-weight: 500;
}
.host { width: 200px; margin: 2px 0 0 16px; }
.url svg { margin-top: 2px; }
.url .translate { margin-left: 393px; }
.url .reload { margin-left: 12px; }
.shield { margin-left: 31px; }
.count { width: 16px; margin: 1px 0 0 17px; font-size: 22px; color: #b0b0b0; }
.lockdown { width: 228px; margin: 2px 0 0 332px; color: #9c9c9c; }
.share { margin: 0 0 5px 28px; }
.plus { margin: 0 0 2px 45px; }
.tabsicon { margin: 0 0 2px 43px; }

.tabs {
  display: flex;
  height: 57px;
  background: #1d1d1d;
  border-bottom: 2px solid #050505;
}
.tab {
  display: flex;
  align-items: center;
  width: 336px;
  flex: none;
  border-top: 1px solid #000;
  border-right: 2px solid #434343;
  color: #999;
  font-size: 21.6px;
  line-height: 30px;
  white-space: nowrap;
}
.tab span { margin: 2px 0 0 8px; }
.tab svg { margin-top: 1px; }
.t1 { width: 338px; padding-left: 49px; }
.t1 span { margin-left: 12px; }
.t2 { padding-left: 58px; }
.t3 { padding-left: 48px; }
.t3 span { margin-left: 10px; }
.t4 { padding-left: 83px; }
.t4 span { margin-left: 9px; font-size: 21.9px; }
.t5, .t6, .t7 { padding-left: 46px; }
.t8 { padding-left: 48px; }
.t8 span { margin-left: 11px; font-size: 21.4px; }
.t9 { padding-left: 48px; border-right: 0; }
.t9 span { margin-left: 10px; }
.tab.active { background: #333; border-top-color: #333; color: #fff; font-weight: 500; }
.fav-pg { color: #1f8a86; }

/* site */
.sitenav, .banner, .doc { font-family: "Liberation Sans", Arial, sans-serif; }
.sitenav {
  position: relative;
  z-index: 1;
  display: flex;
  align-items: center;
  height: 108px;
  padding: 0 62px 0 62px;
  background: #212121;
  font-size: 30.7px;
  box-shadow: 0 16px 40px -18px rgba(0, 0, 0, 0.4);
}
.logo { margin-bottom: 2px; color: #1b6a98; }
.links {
  display: flex;
  gap: 30.7px;
  margin: 0 0 2px 48px;
  color: #579fcf;
  white-space: nowrap;
}
.field {
  border: 2px solid #c9d2dc;
  border-radius: 8px 0 0 8px;
  background: #fff;
  color: #6c757d;
  font-size: 30.7px;
  line-height: 72px;
  height: 77px;
  padding-left: 23px;
}
.btn {
  display: flex;
  align-items: center;
  justify-content: center;
  height: 77px;
  padding: 0 0 5px;
  border: 2px solid #ccc;
  border-radius: 8px;
  background: #fff;
  color: #6c6c6c;
}
.site-field { width: 396px; margin: 0 0 1px auto; }
.site-btn { width: 83px; margin-bottom: 1px; color: #1b6a98; }
.bulb { width: 76px; height: 76px; margin: 0 0 2px 9px; color: #1b6a98; }

.banner {
  height: 56px;
  background: #579fcf;
  color: #000;
  font-size: 30.7px;
  font-weight: 700;
  line-height: 56px;
  text-align: center;
}
.banner a { text-decoration: underline; text-decoration-thickness: 2px; text-underline-offset: 4px; }

.doc {
  width: 2650px;
  margin-left: 187px;
  padding-top: 31px;
  color: #fafafa;
  font-size: 28.8px;
  line-height: 44px;
}
.doc a { color: #579fcf; font-weight: 700; }
.dochead { display: flex; justify-content: space-between; height: 220px; white-space: nowrap; }
.versions { margin-top: -1px; font-size: 30.7px; }
.arrow { display: inline-block; margin: 0 3px; vertical-align: 2px; }
.docsearch { display: flex; }
.doc-field { width: 965px; }
.doc-btn { width: 104px; }
.pagetitle { margin-top: 48px; text-align: center; font-weight: 700; }
.next {
  margin-top: 2px;
  padding: 0 2px 2px 0;
  border-bottom: 4px solid #6b6b6b;
  text-align: right;
}
.doc h1 { margin-top: 36px; font-size: 57.6px; line-height: 70px; color: #579fcf; }
.doc h2 { margin-top: 42px; font-size: 40.3px; line-height: 48px; font-weight: 400; color: #579fcf; }
.copy { margin-top: 37px; }
.legal { margin-top: 31px; line-height: 43px; border-bottom: 4px solid #6b6b6b; }
.toctitle { margin-top: 13px; font-weight: 700; }
.toc { margin-top: 31px; color: #579fcf; line-height: 42px; }
.toc dd { margin-left: 64px; }

/* dock */
.dock {
  display: flex;
  width: 2778px;
  height: 112px;
  margin: 2px 0 0 123px;
  padding-left: 3px;
  border: 2px solid #343434;
  border-radius: 36px;
  background: #111;
}
.app { width: 94px; height: 108px; }
.dot { fill: #909090; }
.divider { width: 2px; height: 84px; margin: 12px 18px 0 22px; background: #4a4a4a; }
```
